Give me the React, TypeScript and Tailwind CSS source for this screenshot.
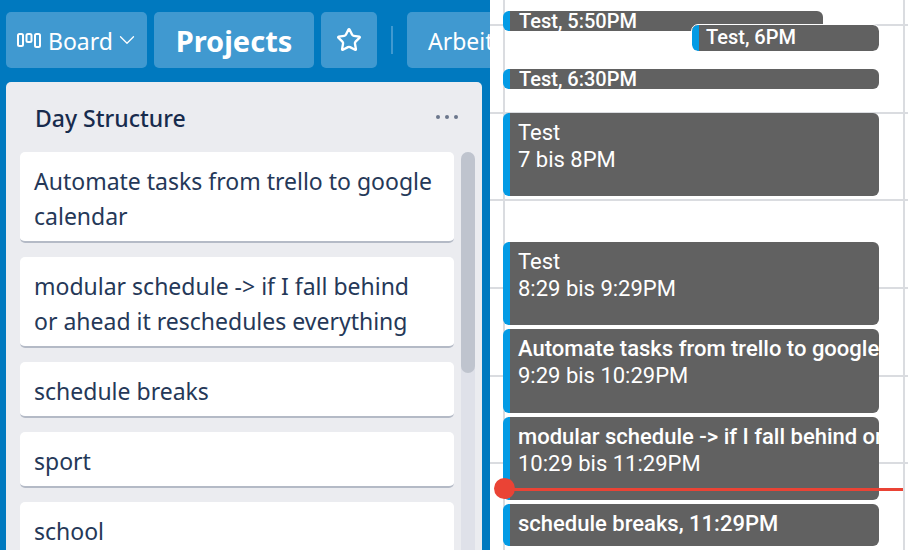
import { ChevronDown, Star } from 'lucide-react';

const cards = [
  { text: 'Automate tasks from trello to google calendar' },
  { text: 'modular schedule -> if I fall behind or ahead it reschedules everything' },
  { text: 'schedule breaks' },
  { text: 'sport' },
  { text: 'school' },
];

type CalEvent = {
  title: string;
  time?: string;
  left: string;
  width: string;
  top: string;
  height: string;
  bold?: boolean;
  small?: boolean;
  ring?: boolean;
};

const events: CalEvent[] = [
  { title: 'Test, 5:50PM', left: 'left-[13px]', width: 'w-[320px]', top: 'top-[11px]', height: 'h-[20px]', small: true },
  { title: 'Test, 6PM', left: 'left-[202px]', width: 'w-[187px]', top: 'top-[25px]', height: 'h-[26px]', small: true, ring: true },
  { title: 'Test, 6:30PM', left: 'left-[13px]', width: 'w-[376px]', top: 'top-[69px]', height: 'h-[20px]', small: true },
  { title: 'Test', time: '7 bis 8PM', left: 'left-[13px]', width: 'w-[376px]', top: 'top-[113px]', height: 'h-[83px]' },
  { title: 'Test', time: '8:29 bis 9:29PM', left: 'left-[13px]', width: 'w-[376px]', top: 'top-[242px]', height: 'h-[83px]' },
  { title: 'Automate tasks from trello to google calendar', time: '9:29 bis 10:29PM', left: 'left-[13px]', width: 'w-[376px]', top: 'top-[329px]', height: 'h-[84px]', bold: true },
  { title: 'modular schedule -> if I fall behind or ahead it reschedules everything', time: '10:29 bis 11:29PM', left: 'left-[13px]', width: 'w-[376px]', top: 'top-[417px]', height: 'h-[83px]', bold: true },
  { title: 'schedule breaks, 11:29PM', left: 'left-[13px]', width: 'w-[376px]', top: 'top-[504px]', height: 'h-[42px]', bold: true },
];

function BoardIcon() {
  return (
    <svg width="24" height="16" viewBox="0 0 24 16" fill="none" stroke="white" strokeWidth="2">
      <rect x="1" y="2" width="5" height="12" rx="1.5" />
      <rect x="9.5" y="2" width="5" height="8" rx="1.5" />
      <rect x="18" y="2" width="5" height="13" rx="1.5" />
    </svg>
  );
}

function EventBox({ ev }: { ev: CalEvent }) {
  return (
    <div
      className={`absolute ${ev.left} ${ev.width} ${ev.top} ${ev.height} overflow-hidden rounded-[6px] bg-[#616161] border-l-[7px] border-[#039be5] text-white font-['Roboto',sans-serif] whitespace-nowrap ${ev.ring ? 'z-10 outline outline-1 outline-white' : ''}`}
    >
      {ev.ring ? (
        <div className="pl-[7px] font-medium text-[20px] leading-[25px]">{ev.title}</div>
      ) : ev.small ? (
        <div className="pl-[9px] font-medium text-[20px] leading-[20px]">{ev.title}</div>
      ) : ev.time ? (
        <div className="pl-[8px] pt-[6px] text-[22px] leading-[27px]">
          <div className={ev.bold ? 'font-medium' : ''}>{ev.title}</div>
          <div>{ev.time}</div>
        </div>
      ) : (
        <div className="pl-[8px] font-medium text-[22px] leading-[40px]">{ev.title}</div>
      )}
    </div>
  );
}

export default function App() {
  return (
    <div className="flex w-[908px] h-[550px] overflow-hidden bg-white">
      {/* board */}
      <div className="w-[490px] h-full shrink-0 bg-[#0079bf] overflow-hidden font-['Noto_Sans',sans-serif]">
        <div className="flex items-center pl-[6px] pt-[12px] h-[68px] text-white overflow-hidden">
          <div className="flex items-center w-[141px] h-[56px] rounded-[5px] bg-[#4099d0] pl-[11px] shrink-0">
            <BoardIcon />
            <span className="ml-[7px] pt-[2px] text-[23px]">Board</span>
            <ChevronDown size={26} strokeWidth={1.2} className="ml-[1px]" />
          </div>
          <div className="flex items-center justify-center w-[160px] h-[56px] ml-[7px] rounded-[5px] bg-[#4099d0] shrink-0">
            <span className="pt-[2px] text-[29px] font-bold">Projects</span>
          </div>
          <div className="flex items-center justify-center w-[56px] h-[56px] ml-[7px] rounded-[5px] bg-[#4099d0] shrink-0">
            <Star size={26} strokeWidth={2.2} />
          </div>
          <div className="w-[2px] h-[28px] ml-[14px] bg-[#4099d0] shrink-0"></div>
          <div className="flex items-center w-[100px] h-[56px] ml-[14px] rounded-l-[5px] bg-[#4099d0] pl-[21px] shrink-0">
            <span className="pt-[2px] text-[23px]">Arbeit</span>
          </div>
        </div>

        <div className="w-[476px] h-[468px] ml-[6px] mt-[14px] rounded-t-[5px] bg-[#ebecf0] overflow-hidden">
          <div className="flex items-center justify-between h-[70px] pl-[29px] pr-[24px] text-[#172b4d]">
            <span className="pt-[2px] text-[23px] font-medium">Day Structure</span>
            <span className="flex gap-[5px]">
              <i className="w-[4px] h-[4px] rounded-full bg-[#6b778c]"></i>
              <i className="w-[4px] h-[4px] rounded-full bg-[#6b778c]"></i>
              <i className="w-[4px] h-[4px] rounded-full bg-[#6b778c]"></i>
            </span>
          </div>
          <div className="flex">
            <div className="flex flex-col gap-[14px] w-[434px] ml-[14px] shrink-0">
              {cards.map((c) => (
                <div key={c.text} className="bg-white rounded-[5px] border-b-[2px] border-[#b4bac6] pl-[14px] pr-[17px] pt-[12px] pb-[7px] text-[23px] leading-[35px] text-[#253858]">
                  {c.text}
                </div>
              ))}
            </div>
            <div className="w-[14px] h-[398px] ml-[7px] shrink-0 rounded-t-full bg-[#dfe1e9]">
              <div className="w-full h-[221px] rounded-full bg-[#bfc4ce]"></div>
            </div>
          </div>
        </div>
      </div>

      {/* calendar */}
      <div className="relative flex-1 h-full overflow-hidden bg-white">
        <div className="flex flex-col w-full">
          <div className="h-[26px] border-b-[2px] border-[#dadce0]"></div>
          <div className="h-[88px] border-b-[2px] border-[#dadce0]"></div>
          <div className="h-[87px] border-b-[2px] border-[#dadce0]"></div>
          <div className="h-[88px] border-b-[2px] border-[#dadce0]"></div>
          <div className="h-[88px] border-b-[2px] border-[#dadce0]"></div>
          <div className="h-[87px] border-b-[2px] border-[#dadce0]"></div>
        </div>
        <div className="absolute top-0 bottom-0 left-[13px] w-[2px] bg-[#dadce0]"></div>
        <div className="absolute top-0 bottom-0 left-[413px] w-[2px] bg-[#dadce0]"></div>
        {events.map((ev) => (
          <EventBox key={ev.top} ev={ev} />
        ))}
        {/* now indicator */}
        <div className="absolute z-20 left-[14px] top-[488px] w-[399px] h-[3px] bg-[#ea4335]"></div>
        <div className="absolute z-20 left-[4px] top-[478px] w-[21px] h-[21px] rounded-full bg-[#ea4335]"></div>
      </div>
    </div>
  );
}
